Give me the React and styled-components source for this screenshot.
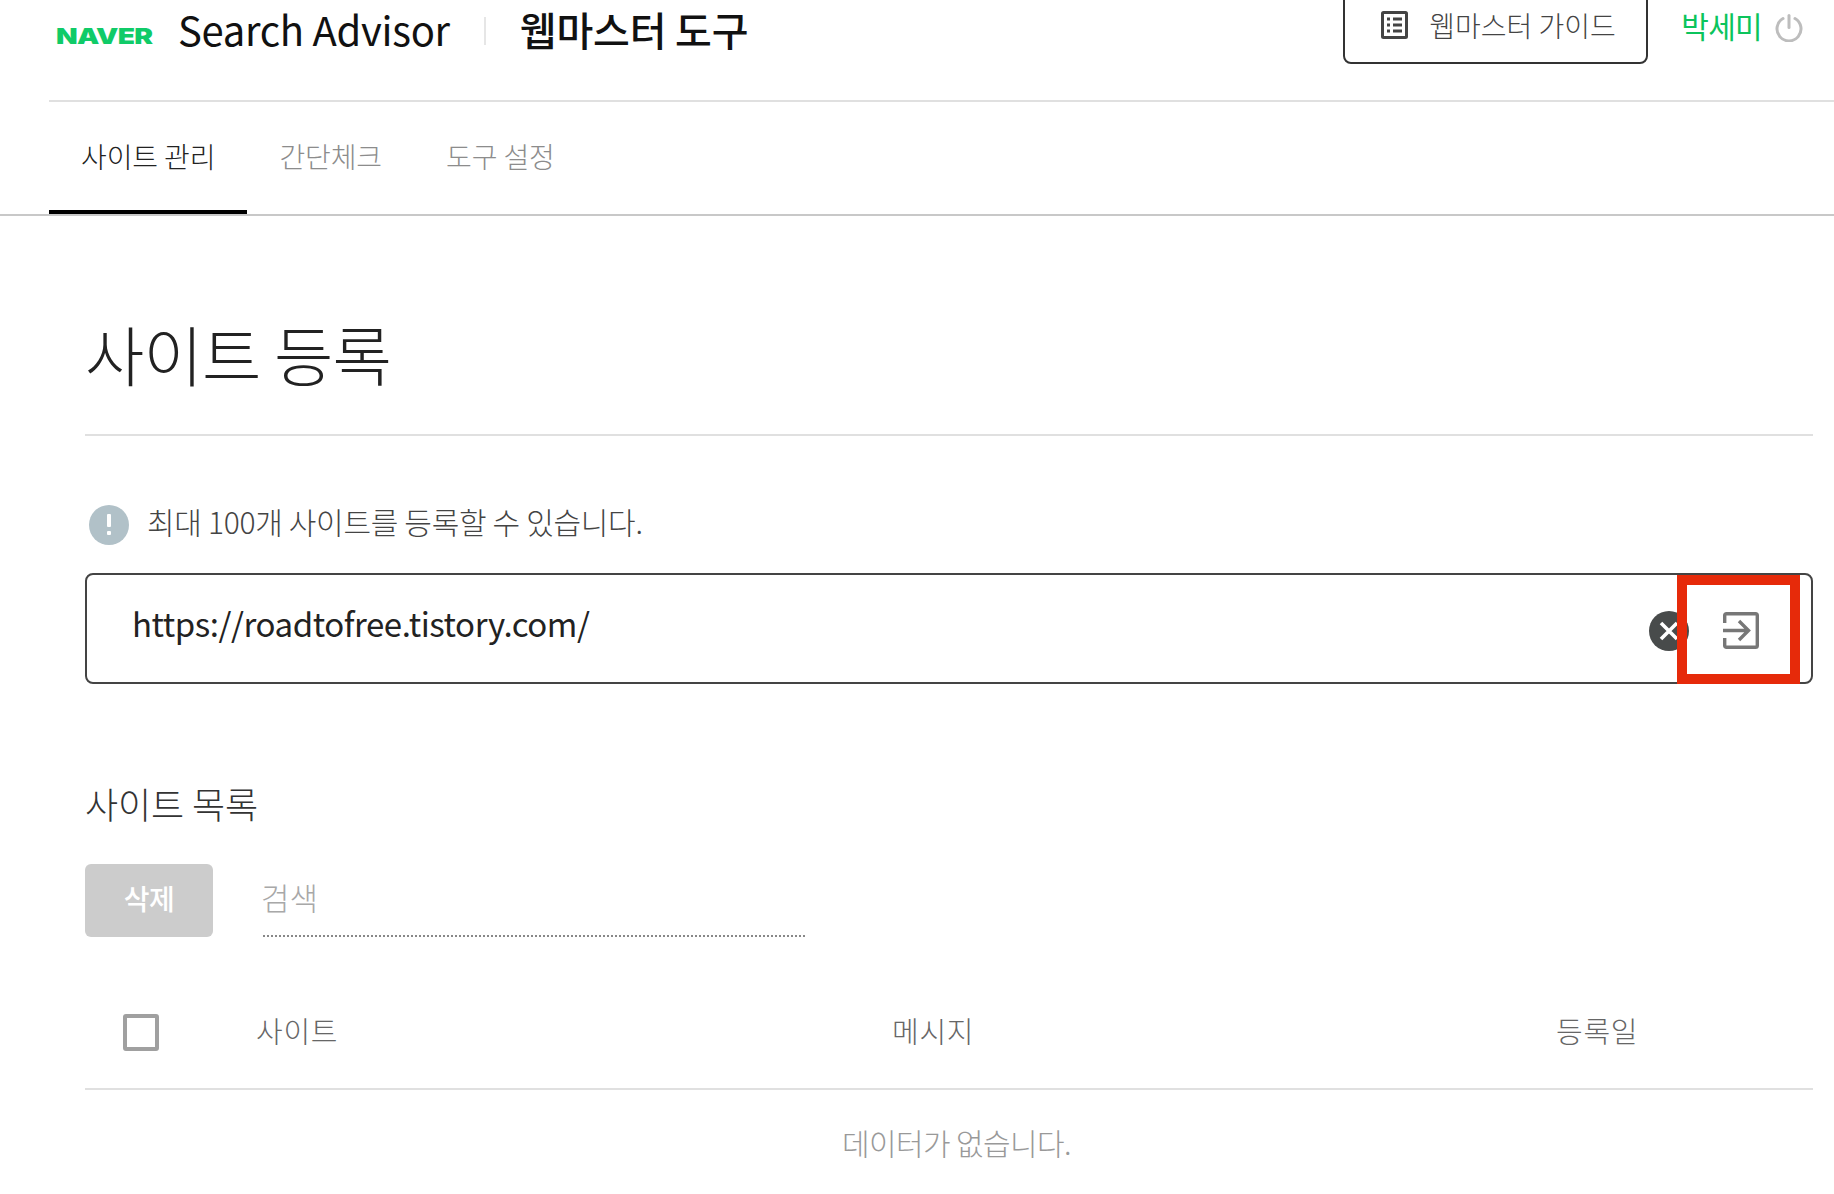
import React from "react";
import styled, { createGlobalStyle } from "styled-components";

const GlobalStyle = createGlobalStyle`
  html, body {
    margin: 0;
    padding: 0;
    background: #fff;
    overflow: hidden;
  }
  body {
    font-family: "Noto Sans CJK KR", "Noto Sans", sans-serif;
    font-weight: 300;
    color: #333;
  }
`;

const Page = styled.div`
  width: 1834px;
  height: 1194px;
  overflow: hidden;
`;

const Header = styled.header`
  margin-left: 49px;
  height: 100px;
  padding: 0 31px 0 7px;
  display: flex;
  justify-content: space-between;
  align-items: flex-start;
  border-bottom: 2px solid #e0e0e0;
`;

const Brand = styled.div`
  display: flex;
  align-items: center;
  height: 58px;
`;

const Logo = styled.span`
  width: 97px;
  margin-top: 13px;
  font-family: "Inter", sans-serif;
  font-weight: 900;
  font-size: 22px;
  letter-spacing: -0.6px;
  color: #10cb68;
  transform: scaleX(1.28);
  transform-origin: left center;
`;

const ProductName = styled.span`
  margin-left: 25px;
  font-size: 40px;
  font-weight: 400;
  letter-spacing: -0.3px;
  color: #111;
`;

const Divider = styled.span`
  width: 2px;
  height: 28px;
  margin: 4px 34px 0 34px;
  background: #e6e6e6;
`;

const ToolName = styled.span`
  font-size: 40px;
  font-weight: 500;
  letter-spacing: -0.2px;
  color: #111;
`;

const UserArea = styled.div`
  display: flex;
  align-items: flex-start;
`;

const GuideButton = styled.a`
  box-sizing: border-box;
  width: 305px;
  height: 75px;
  margin-top: -11px;
  padding: 0 0 3px 36px;
  display: flex;
  align-items: center;
  gap: 21px;
  border: 2px solid #333;
  border-radius: 8px;
  font-size: 28px;
  letter-spacing: 0;
  color: #444;
`;

const UserName = styled.span`
  margin: 3px 0 0 33px;
  font-size: 30px;
  font-weight: 400;
  letter-spacing: -0.7px;
  color: #0bc45c;
`;

const PowerButton = styled.span`
  margin: 14px 0 0 13px;
  display: flex;
`;

const TabBar = styled.nav`
  height: 112px;
  padding-left: 49px;
  display: flex;
  border-bottom: 2px solid #c8c8c8;
`;

const Tab = styled.a`
  height: 108px;
  padding: 0 32px;
  display: flex;
  align-items: center;
  font-size: 28px;
  letter-spacing: -0.1px;
  color: ${(p) => (p.$active ? "#222" : "#8c8c8c")};
  border-bottom: 4px solid ${(p) => (p.$active ? "#000" : "transparent")};
`;

const Main = styled.main`
  padding: 0 21px 0 85px;
`;

const PageTitle = styled.h1`
  margin: 0;
  height: 220px;
  box-sizing: border-box;
  padding-top: 92px;
  font-size: 64.5px;
  line-height: 90px;
  font-weight: 300;
  color: #222;
  letter-spacing: -0.8px;
  border-bottom: 2px solid #e0e0e0;
`;

const Notice = styled.p`
  margin: 67px 0 0 4px;
  height: 43px;
  display: flex;
  align-items: center;
  gap: 18px;
  font-size: 30px;
  letter-spacing: -0.3px;
  color: #444;
`;

const NoticeText = styled.span`
  margin-top: -8px;
`;

const NoticeIcon = styled.span`
  width: 40px;
  height: 40px;
  border-radius: 50%;
  background: #b1c1c8;
  display: flex;
  align-items: center;
  justify-content: center;
`;

const UrlBox = styled.div`
  position: relative;
  box-sizing: border-box;
  height: 111px;
  margin-top: 27px;
  padding: 0 52px 0 45px;
  display: flex;
  align-items: center;
  border: 2px solid #444;
  border-radius: 8px;
`;

const UrlText = styled.span`
  flex: 1;
  margin-top: -12px;
  font-size: 33px;
  font-weight: 400;
  letter-spacing: -0.45px;
  color: #222;
`;

const ClearButton = styled.span`
  width: 40px;
  height: 40px;
  margin-top: 4px;
  border-radius: 50%;
  background: #484b4b;
  display: flex;
  align-items: center;
  justify-content: center;
`;

const SubmitIcon = styled.span`
  margin: 4px 0 0 34px;
  display: flex;
`;

const Highlight = styled.span`
  position: absolute;
  left: 1590px;
  top: 0;
  box-sizing: border-box;
  width: 123px;
  height: 109px;
  border: 10px solid #e62a0a;
`;

const SectionTitle = styled.h2`
  margin: 97px 0 0;
  height: 45px;
  font-size: 36px;
  line-height: 45px;
  font-weight: 300;
  letter-spacing: -0.1px;
  color: #333;
`;

const Toolbar = styled.div`
  margin-top: 37px;
  display: flex;
  align-items: flex-end;
  gap: 50px;
`;

const DeleteButton = styled.button`
  width: 128px;
  height: 73px;
  padding: 0 0 6px;
  border: 0;
  border-radius: 6px;
  background: #cccccc;
  color: #fff;
  font-family: inherit;
  font-size: 28px;
  font-weight: 500;
  letter-spacing: -0.5px;
`;

const SearchField = styled.div`
  box-sizing: border-box;
  width: 542px;
  height: 74px;
  padding-bottom: 6px;
  display: flex;
  align-items: center;
  border-bottom: 2px dotted #888;
  font-size: 31px;
  color: #a8a8a8;
`;

const SearchHint = styled.span`
  margin-left: -2px;
`;

const HeadRow = styled.div`
  box-sizing: border-box;
  height: 153px;
  padding-top: 40px;
  display: grid;
  grid-template-columns: 171px 636px 664px 1fr;
  align-items: start;
  border-bottom: 2px solid #e0e0e0;
`;

const CheckBox = styled.span`
  box-sizing: border-box;
  width: 36px;
  height: 37px;
  margin: 37px 0 0 38px;
  border: 4px solid #a0a0a0;
  border-radius: 3px;
`;

const HeadCell = styled.span`
  margin-top: 33px;
  font-size: 29px;
  line-height: 40px;
  letter-spacing: 0.7px;
  color: #666;
`;

const EmptyRow = styled.div`
  padding-top: 31px;
  margin-left: 757px;
  font-size: 30px;
  line-height: 42px;
  letter-spacing: -0.6px;
  color: #999;
`;

const GuideIcon = () => (
  <svg width="27" height="28" viewBox="0 0 27 28" fill="none">
    <rect x="1.5" y="1.5" width="24" height="25" rx="1" stroke="#444" strokeWidth="3" />
    <path d="M6 8h3M12 8h9M6 14h3M12 14h9M6 20h3M12 20h9" stroke="#444" strokeWidth="3" />
  </svg>
);

const PowerIcon = () => (
  <svg width="28" height="28" viewBox="0 0 28 28" fill="none">
    <path d="M8 4.5a12 12 0 1 0 12 0" stroke="#bdbdbd" strokeWidth="3" strokeLinecap="round" />
    <path d="M14 1.5v12" stroke="#bdbdbd" strokeWidth="3" strokeLinecap="round" />
  </svg>
);

const EnterIcon = () => (
  <svg width="36" height="37" viewBox="0 0 36 37" fill="none" stroke="#777" strokeWidth="3.4">
    <path d="M1.7 11V3.5q0-1.8 1.8-1.8h29q1.8 0 1.8 1.8v30q0 1.8-1.8 1.8h-29q-1.8 0-1.8-1.8V26" />
    <path d="M0 18.5h25M16 9l9.5 9.5L16 28" />
  </svg>
);

const App = () => {
  return (
    <Page>
      <GlobalStyle />
      <Header>
        <Brand>
          <Logo>NAVER</Logo>
          <ProductName>Search Advisor</ProductName>
          <Divider />
          <ToolName>웹마스터 도구</ToolName>
        </Brand>
        <UserArea>
          <GuideButton>
            <GuideIcon />
            웹마스터 가이드
          </GuideButton>
          <UserName>박세미</UserName>
          <PowerButton>
            <PowerIcon />
          </PowerButton>
        </UserArea>
      </Header>
      <TabBar>
        <Tab $active>사이트 관리</Tab>
        <Tab>간단체크</Tab>
        <Tab>도구 설정</Tab>
      </TabBar>
      <Main>
        <PageTitle>사이트 등록</PageTitle>
        <Notice>
          <NoticeIcon>
            <svg width="6" height="22" viewBox="0 0 6 22" fill="#fff">
              <rect x="1" y="0" width="4" height="13" rx="1" />
              <rect x="1" y="17" width="4" height="4" rx="1" />
            </svg>
          </NoticeIcon>
          <NoticeText>최대 100개 사이트를 등록할 수 있습니다.</NoticeText>
        </Notice>
        <UrlBox>
          <UrlText>https://roadtofree.tistory.com/</UrlText>
          <ClearButton>
            <svg width="20" height="20" viewBox="0 0 20 20" stroke="#fff" strokeWidth="3.6">
              <path d="M2 2l16 16M18 2L2 18" />
            </svg>
          </ClearButton>
          <SubmitIcon>
            <EnterIcon />
          </SubmitIcon>
          <Highlight />
        </UrlBox>
        <SectionTitle>사이트 목록</SectionTitle>
        <Toolbar>
          <DeleteButton>삭제</DeleteButton>
          <SearchField>
            <SearchHint>검색</SearchHint>
          </SearchField>
        </Toolbar>
        <HeadRow>
          <CheckBox />
          <HeadCell>사이트</HeadCell>
          <HeadCell>메시지</HeadCell>
          <HeadCell>등록일</HeadCell>
        </HeadRow>
        <EmptyRow>데이터가 없습니다.</EmptyRow>
      </Main>
    </Page>
  );
};

export default App;
